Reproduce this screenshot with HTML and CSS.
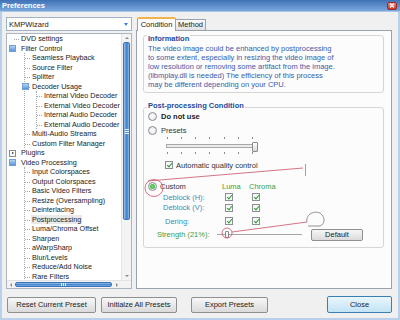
FILE: index.html
```html
<!DOCTYPE html>
<html lang="en">
<head>
    <meta charset="UTF-8">
    <meta name="viewport" content="width=device-width, initial-scale=1.0">
    <title>Preferences</title>
    <link rel="stylesheet" href="styles.css">
</head>
<body>
    <div class="window">
        <div class="titlebar">
            <span class="title">Preferences</span>
            <span class="close">
                <svg width="6" height="5" viewBox="0 0 6 5"><path d="M1 0.5 L5 4.5 M5 0.5 L1 4.5" stroke="#fff" stroke-width="1.1"/></svg>
            </span>
        </div>
        <div class="frame">
            <div class="main">
                <!-- preset combo and settings tree -->
                <div class="left">
                    <div class="combo">KMPWizard<span class="arrow"></span></div>
                    <div class="treebox">
                        <div class="treearea">
                            <div class="tree">
                                <div class="node"><span class="dash"></span>DVD settings</div>
                                <div class="node"><span class="exp"></span>Filter Control</div>
                                <div class="kids">
                                    <div class="node">Seamless Playback</div>
                                    <div class="node">Source Filter</div>
                                    <div class="node">Splitter</div>
                                    <div class="node"><span class="exp"></span>Decoder Usage</div>
                                    <div class="kids">
                                        <div class="node">Internal Video Decoder</div>
                                        <div class="node">External Video Decoder</div>
                                        <div class="node">Internal Audio Decoder</div>
                                        <div class="node">External Audio Decoder</div>
                                    </div>
                                    <div class="node">Multi-Audio Streams</div>
                                    <div class="node">Custom Filter Manager</div>
                                </div>
                                <div class="node"><span class="exp closed"></span>Plugins</div>
                                <div class="node"><span class="exp"></span>Video Processing</div>
                                <div class="kids">
                                    <div class="node">Input Colorspaces</div>
                                    <div class="node">Output Colorspaces</div>
                                    <div class="node">Basic Video Filters</div>
                                    <div class="node">Resize (Oversampling)</div>
                                    <div class="node">Deinterlacing</div>
                                    <div class="node"><span class="sel">Postprocessing</span></div>
                                    <div class="node">Luma/Chroma Offset</div>
                                    <div class="node">Sharpen</div>
                                    <div class="node">aWarpSharp</div>
                                    <div class="node">Blur/Levels</div>
                                    <div class="node">Reduce/Add Noise</div>
                                    <div class="node">Rare Filters</div>
                                </div>
                            </div>
                            <div class="vscroll">
                                <span class="sarrow"><i class="tri up"></i></span>
                                <span class="vthumb"></span>
                                <span class="sarrow bottom"><i class="tri down"></i></span>
                            </div>
                        </div>
                        <div class="hscroll">
                            <span class="sarrow h"><i class="tri lft"></i></span>
                            <span class="hthumb"></span>
                            <span class="sarrow h right"><i class="tri rgt"></i></span>
                            <span class="corner"></span>
                        </div>
                    </div>
                </div>

                <!-- condition tab -->
                <div class="right">
                    <div class="tabs">
                        <span class="tab active">Condition</span>
                        <span class="tab">Method</span>
                    </div>
                    <div class="panel">
                        <div class="group info">
                            <div class="gtitle">Information</div>
                            <p class="infotext">The video image could be enhanced by postprocessing<br>to some extent, especially in resizing the video image of<br>low resolution or removing some artifact from the image.<br>(libmplay.dll is needed) The efficiency of this process<br>may be different depending on your CPU.</p>
                        </div>
                        <div class="group post">
                            <div class="gtitle">Post-processing Condition</div>
                            <div class="row r-none"><span class="radio"></span><b>Do not use</b></div>
                            <div class="row r-presets"><span class="radio"></span>Presets</div>
                            <div class="slider">
                                <div class="ticks"><i></i><i></i><i></i><i></i><i></i><i></i><i></i></div>
                                <div class="track"></div>
                                <div class="ticks"><i></i><i></i><i></i><i></i><i></i><i></i><i></i></div>
                                <span class="knob"></span>
                            </div>
                            <div class="row r-auto"><span class="chk"></span>Automatic quality control</div>
                            <div class="row r-head">
                                <div class="c-label"><span class="radio on"></span>Custom</div>
                                <div class="c-col green">Luma</div>
                                <div class="c-col green">Chroma</div>
                            </div>
                            <div class="row r-opt">
                                <div class="c-label teal">Deblock (H):</div>
                                <div class="c-col"><span class="chk"></span></div>
                                <div class="c-col"><span class="chk"></span></div>
                            </div>
                            <div class="row r-opt r-v">
                                <div class="c-label teal">Deblock (V):</div>
                                <div class="c-col"><span class="chk"></span></div>
                                <div class="c-col"><span class="chk"></span></div>
                            </div>
                            <div class="row r-opt r-dering">
                                <div class="c-label teal">Dering:</div>
                                <div class="c-col"><span class="chk"></span></div>
                                <div class="c-col"><span class="chk"></span></div>
                            </div>
                            <div class="row r-strength">
                                <span class="s-label green">Strength (21%):</span>
                                <span class="sline"><span class="sknob"></span></span>
                                <button class="btn small">Default</button>
                            </div>
                        </div>
                    </div>
                </div>
            </div>

            <div class="buttons">
                <button class="btn b-reset">Reset Current Preset</button>
                <button class="btn b-init">Initialze All Presets</button>
                <button class="btn b-export">Export Presets</button>
                <button class="btn b-close">Close</button>
            </div>
        </div>

        <!-- hand drawn marks over the screenshot -->
        <svg class="marks" width="400" height="320" viewBox="0 0 400 320">
            <line x1="148" y1="181" x2="303" y2="168" stroke="#c9506a" stroke-width="0.8"/>
            <line x1="305.5" y1="164" x2="305.5" y2="176" stroke="#8a8a8a" stroke-width="0.8"/>
            <ellipse cx="154" cy="188" rx="9" ry="8.5" fill="none" stroke="#c9506a" stroke-width="0.8"/>
            <circle cx="227" cy="233" r="5" fill="none" stroke="#c9506a" stroke-width="0.8"/>
            <line x1="232" y1="232" x2="307" y2="222" stroke="#c9506a" stroke-width="0.8"/>
            <path d="M307 222 C305 213 318 209 322 215 C325 218 325 224 320 226 L308 226" fill="none" stroke="#777" stroke-width="0.8"/>
        </svg>
    </div>
</body>
</html>
```

FILE: styles.css
```css
/* window frame */
* {
    box-sizing: border-box;
}
body {
    margin: 0;
    font-family: "Liberation Sans", Arial, sans-serif;
    font-size: 7.5px;
    color: #222;
}
.window {
    position: relative;
    width: 400px;
    height: 320px;
    background: #f0f0f0;
    overflow: hidden;
}
.titlebar {
    height: 12px;
    display: flex;
    align-items: center;
    justify-content: space-between;
    padding: 0 3px 0 2px;
    background: linear-gradient(#3f72b6, #7aa8dc);
    border-bottom: 1px solid #a9c6e8;
}
.title {
    color: #fff;
    font-weight: bold;
}
.close {
    width: 10px;
    height: 8px;
    display: flex;
    align-items: center;
    justify-content: center;
    border: 1px solid #9a2b2b;
    border-radius: 2px;
    background: linear-gradient(#ee8a7a, #c8392f);
}
.close svg {
    display: block;
}
.frame {
    height: 308px;
    display: flex;
    flex-direction: column;
    border: 2px solid #b9d0ea;
    border-top: none;
}
.main {
    display: flex;
    gap: 4px;
    padding: 5px 6px 0 4px;
}

/* left pane */
.left {
    width: 126px;
    display: flex;
    flex-direction: column;
    gap: 2px;
}
.combo {
    height: 14px;
    display: flex;
    align-items: center;
    justify-content: space-between;
    padding: 0 3px 0 2px;
    border: 1px solid #a3b3c6;
    background: #fff;
}
.arrow {
    width: 0;
    height: 0;
    border-left: 2px solid transparent;
    border-right: 2px solid transparent;
    border-top: 3px solid #3a7fd0;
}
.treebox {
    height: 256px;
    display: flex;
    flex-direction: column;
    border: 1px solid #aab6c4;
    background: #fff;
}
.treearea {
    flex: 1;
    display: flex;
    min-height: 0;
}
.tree {
    flex: 1;
    overflow: hidden;
    white-space: nowrap;
    font-size: 7.2px;
    line-height: 9.5px;
}
.node {
    position: relative;
    height: 9.5px;
    padding-left: 14px;
}
.kids {
    margin-left: 17px;
    border-left: 1px dotted #a8a8a8;
}
.kids .kids {
    margin-left: 11px;
}
.kids .node {
    padding-left: 7px;
}
.kids .node::before {
    content: "";
    position: absolute;
    left: 0;
    top: 5px;
    width: 5px;
    border-top: 1px dotted #a8a8a8;
}
.dash {
    position: absolute;
    left: 7px;
    top: 5px;
    width: 5px;
    border-top: 1px dotted #a8a8a8;
}
.exp {
    position: absolute;
    left: 2px;
    top: 1.5px;
    width: 7px;
    height: 7px;
    border: 1px solid #6f9fd6;
    background: linear-gradient(#b4d6f4, #5b93d6);
    z-index: 1;
}
.kids .exp {
    left: -3px;
}
.exp.closed {
    border-color: #8a8a8a;
    background: #fff;
    display: flex;
    align-items: center;
    justify-content: center;
}
.exp.closed::after {
    content: "";
    border-left: 2px solid #222;
    border-top: 1.5px solid transparent;
    border-bottom: 1.5px solid transparent;
}
.sel {
    background: #e9e9e9;
    padding: 0 1px;
    margin-left: -1px;
}

/* scrollbars */
.vscroll {
    width: 10px;
    display: flex;
    flex-direction: column;
    background: #f3f3f3;
    border-left: 1px solid #e4e4e4;
}
.sarrow {
    height: 8px;
    display: flex;
    align-items: center;
    justify-content: center;
}
.sarrow.bottom {
    margin-top: auto;
}
.sarrow.h {
    width: 8px;
    height: auto;
}
.sarrow.right {
    margin-left: auto;
}
.tri {
    width: 0;
    height: 0;
    border: 2px solid transparent;
}
.tri.up {
    border-bottom-color: #888;
    border-top-width: 0;
}
.tri.down {
    border-top-color: #888;
    border-bottom-width: 0;
}
.tri.lft {
    border-right-color: #888;
    border-left-width: 0;
}
.tri.rgt {
    border-left-color: #888;
    border-right-width: 0;
}
.vthumb {
    height: 178px;
    margin: 0 1px;
    border: 1px solid #3a72b8;
    border-radius: 2px;
    background: linear-gradient(to right, #a2c8ee, #4b8bd3 40%, #3f7fcb 60%, #8dbbe8);
    display: flex;
    align-items: center;
    justify-content: center;
}
.vthumb::after {
    content: "";
    width: 4px;
    height: 5px;
    background: repeating-linear-gradient(#e8f2fc 0 1px, transparent 1px 2px);
}
.hscroll {
    height: 8px;
    display: flex;
    background: #f3f3f3;
    border-top: 1px solid #e4e4e4;
}
.hthumb {
    width: 97px;
    margin: 1px 0;
    border: 1px solid #3a72b8;
    border-radius: 2px;
    background: linear-gradient(#a2c8ee, #4b8bd3 45%, #3f7fcb 60%, #8dbbe8);
    display: flex;
    align-items: center;
    justify-content: center;
}
.hthumb::after {
    content: "";
    width: 5px;
    height: 3px;
    background: repeating-linear-gradient(to right, #e8f2fc 0 1px, transparent 1px 2px);
}
.corner {
    width: 10px;
}

/* right pane */
.right {
    width: 256px;
    display: flex;
    flex-direction: column;
}
.tabs {
    height: 13px;
    display: flex;
    align-items: flex-end;
    padding-left: 2px;
}
.tab {
    width: 31px;
    height: 11px;
    margin-left: -1px;
    line-height: 10px;
    text-align: center;
    border: 1px solid #9aa3ad;
    border-bottom: none;
    background: linear-gradient(#fafafa, #e2e2e2);
}
.tab.active {
    width: 39px;
    height: 14px;
    line-height: 11px;
    margin-bottom: -1px;
    position: relative;
    z-index: 1;
    background: #fcfcfc;
    border-top: 2px solid #f0b44a;
    border-radius: 2px 2px 0 0;
}
.panel {
    height: 259px;
    padding: 4px 7px 0 6px;
    border: 1px solid #9aa3ad;
    background: #fcfcfc;
}
.group {
    width: 241px;
    border: 1px solid #d6d6d6;
    border-radius: 3px;
}
.gtitle {
    width: fit-content;
    height: 10px;
    line-height: 10px;
    margin-left: 3px;
    padding: 0 1px;
    background: #fcfcfc;
    font-weight: bold;
    color: #1f4a9a;
}
.info {
    height: 58px;
}
.info .gtitle {
    margin-top: -2.5px;
}
.infotext {
    margin: 0;
    padding-left: 4px;
    line-height: 9px;
    color: #3b5ca8;
}
.post {
    height: 141px;
    margin-top: 14px;
}
.post .gtitle {
    margin-top: -7px;
    margin-bottom: -3px;
}

/* post-processing rows */
.row {
    display: flex;
    align-items: center;
}
.r-none {
    height: 14px;
    margin-top: 1px;
    padding-left: 4px;
}
.r-presets {
    height: 14px;
    padding-left: 4px;
    color: #333;
}
.radio {
    width: 9px;
    height: 9px;
    margin-right: 4px;
    display: flex;
    align-items: center;
    justify-content: center;
    border: 1px solid #8a8f96;
    border-radius: 50%;
    background: radial-gradient(#fff, #e0e0e0);
}
.radio.on {
    margin-right: 3px;
}
.radio.on::after {
    content: "";
    width: 5px;
    height: 5px;
    border-radius: 50%;
    background: radial-gradient(#7be07b, #22a022);
}
.slider {
    position: relative;
    width: 90px;
    height: 18px;
    margin-left: 22px;
    display: flex;
    flex-direction: column;
    justify-content: space-between;
}
.ticks {
    height: 3px;
    display: flex;
    justify-content: space-between;
    padding: 0 3px 0 1px;
}
.ticks i {
    width: 1px;
    height: 2px;
    background: #8a8a8a;
}
.track {
    height: 4px;
    border: 1px solid #a8a8a8;
    background: #ececec;
}
.knob {
    position: absolute;
    left: 86px;
    top: 5px;
    width: 6px;
    height: 10px;
    border: 1px solid #8a8a8a;
    border-radius: 1px;
    background: linear-gradient(#fff, #d8d8d8);
}
.r-auto {
    height: 14px;
    margin-top: 3px;
    padding-left: 21px;
    color: #333;
}
.chk {
    display: block;
    position: relative;
    flex: none;
    width: 8px;
    height: 8px;
    margin-right: 3px;
    border: 1px solid #8a8f96;
    background: linear-gradient(#f4f4f4, #fff);
}
.chk::after {
    content: "";
    position: absolute;
    left: 2px;
    top: 0;
    width: 2px;
    height: 4px;
    border: solid #2a9a2a;
    border-width: 0 1.5px 1.5px 0;
    transform: rotate(40deg);
}
.r-head {
    height: 12px;
    margin-top: 8px;
}
.c-label {
    width: 77px;
    height: 100%;
    display: flex;
    align-items: center;
    padding-left: 4px;
    color: #333;
}
.c-col {
    width: 27px;
    height: 100%;
    display: flex;
    align-items: center;
    padding-left: 1px;
}
.r-opt {
    height: 10px;
}
.r-opt .c-label {
    padding-left: 19px;
}
.r-opt .c-col {
    padding-left: 4px;
}
.r-v {
    height: 11px;
}
.r-dering {
    height: 12px;
    margin-top: 2px;
}
.r-dering .c-label {
    padding-left: 21px;
}
.green {
    color: #3c9c3c;
}
.c-label.teal {
    color: #3a8fb4;
}
.r-strength {
    height: 13px;
    margin-top: 1px;
}
.s-label {
    width: 73px;
    padding-left: 13px;
}
.sline {
    position: relative;
    width: 85px;
    height: 1px;
    background: #a5a5a5;
}
.sknob {
    position: absolute;
    left: 8px;
    top: -3px;
    width: 4px;
    height: 7px;
    border: 1px solid #888;
    border-radius: 1px;
    background: #f8f8f8;
}

/* buttons */
.btn {
    height: 16px;
    padding: 0;
    font: inherit;
    color: #222;
    border: 1px solid #8e8f8f;
    border-radius: 2px;
    background: linear-gradient(#f7f7f7, #dadada);
}
.btn.small {
    width: 52px;
    height: 12px;
    margin-left: 9px;
}
.buttons {
    height: 17px;
    margin-top: 7px;
    display: flex;
    align-items: center;
    padding: 0 6px 0 5px;
}
.b-reset {
    width: 89px;
}
.b-init {
    width: 76px;
    margin-left: 5px;
}
.b-export {
    width: 77px;
    margin-left: 14px;
}
.b-close {
    width: 65px;
    height: 17px;
    margin-left: auto;
    border-color: #3c7fb1;
    background: linear-gradient(#eaf6fd, #c2e3f5);
}
.marks {
    position: absolute;
    left: 0;
    top: 0;
    pointer-events: none;
}
```
